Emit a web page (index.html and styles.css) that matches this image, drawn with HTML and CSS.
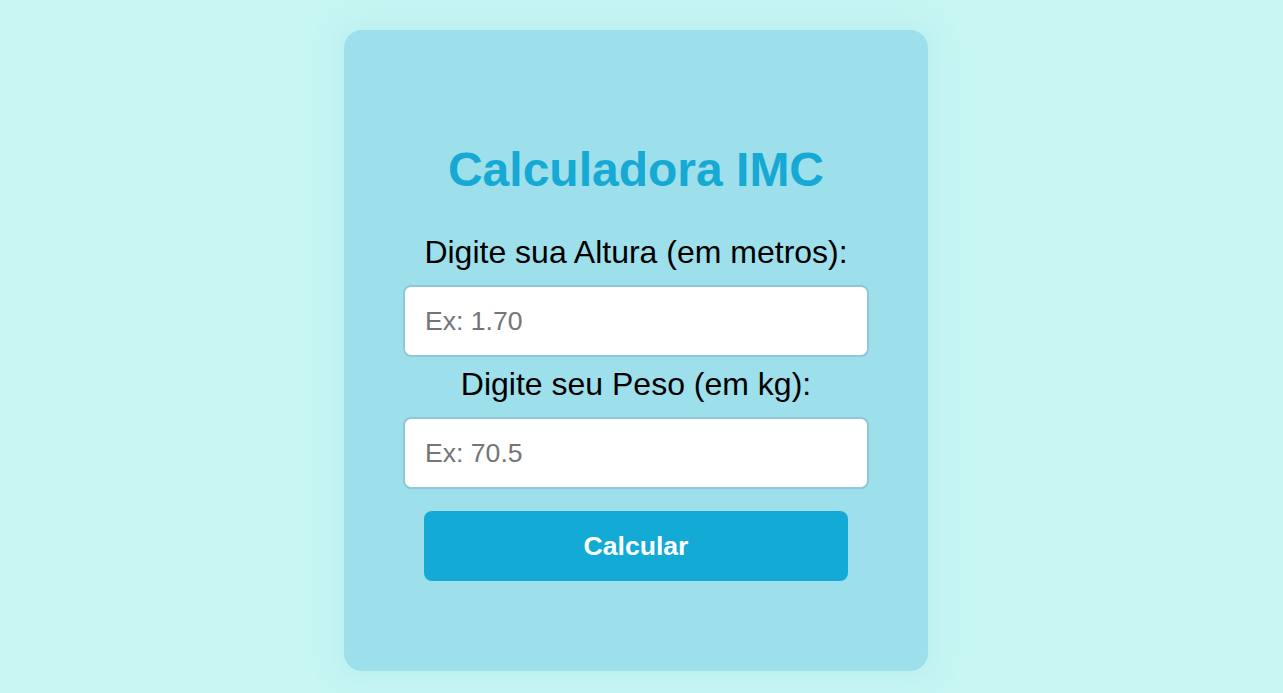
FILE: index.html
```html
<!DOCTYPE html>
<html lang="pt-BR">
<head>
<meta charset="utf-8">
<title>Calculadora IMC</title>
<link rel="stylesheet" href="styles.css">
</head>
<body>
<main class="page">
  <section class="card">
    <h1 class="title">Calculadora IMC</h1>
    <form class="form" onsubmit="return false;">
      <label class="label label-first" for="altura">Digite sua Altura (em metros):</label>
      <input class="field" id="altura" type="text" placeholder="Ex: 1.70">
      <label class="label" for="peso">Digite seu Peso (em kg):</label>
      <input class="field" id="peso" type="text" placeholder="Ex: 70.5">
      <button class="btn" type="submit">Calcular</button>
    </form>
  </section>
</main>
</body>
</html>
```

FILE: styles.css
```css
* { box-sizing: border-box; }

html, body {
  margin: 0;
  padding: 0;
  height: 100%;
}

body {
  background: #c7f6f3;
  font-family: "Liberation Sans", Arial, Helvetica, sans-serif;
  color: #000;
  overflow: hidden;
}

.page {
  display: flex;
  justify-content: center;
  padding: 30px 11px 0 0;
}

.card {
  width: 584px;
  padding: 112px 59px 90px;
  background: #9ddfeb;
  border-radius: 18px;
  box-shadow: 0 0 22px 6px rgba(180, 236, 240, 0.7);
}

.title {
  margin: 0 0 36px;
  font-size: 48px;
  line-height: 56px;
  font-weight: 700;
  color: #15a9d4;
  text-align: center;
}

.form {
  display: flex;
  flex-direction: column;
}

.label {
  display: block;
  font-size: 32px;
  line-height: 37px;
  text-align: center;
  margin: 9px 0 14px;
}

.label-first {
  margin-top: 0;
}

.field {
  width: 100%;
  height: 72px;
  padding: 0 20px;
  border: 2px solid #8dc8d8;
  border-radius: 8px;
  background: #fff;
  font-family: inherit;
  font-size: 26.6px;
  color: #000;
  outline: none;
}

.field::placeholder {
  color: #757575;
  opacity: 1;
}

.btn {
  align-self: center;
  width: 424px;
  height: 70px;
  margin-top: 22px;
  border: none;
  border-radius: 8px;
  background: #13aad5;
  color: #fff;
  font-family: inherit;
  font-size: 26.6px;
  font-weight: 700;
  cursor: pointer;
}
```
